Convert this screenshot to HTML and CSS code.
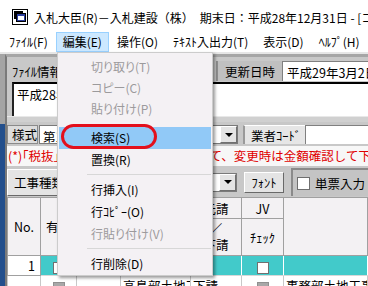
FILE: index.html
```html
<!DOCTYPE html>
<html lang="ja">
<head>
  <meta charset="UTF-8">
  <title>入札大臣</title>
  <link rel="stylesheet" href="styles.css">
</head>
<body>
<div class="window">
  <div class="titlebar">
    <svg class="app-icon" width="16" height="16" viewBox="0 0 16 16">
      <rect x="0.5" y="0.5" width="15" height="15" fill="#fff" stroke="#000"/>
      <rect x="2" y="2" width="9" height="8" fill="#000"/>
      <rect x="4.5" y="4.5" width="9" height="8" fill="#2c3f9e" stroke="#000"/>
      <rect x="6" y="7" width="6" height="4" fill="#fff"/>
    </svg>
    <span class="caption">入札大臣(R)－入札建設（株）　期末日：平成28年12月31日 - [コスト管理]</span>
  </div>

  <div class="menubar">
    <span class="menu-item">ﾌｧｲﾙ(F)</span>
    <span class="menu-item open">編集(E)</span>
    <span class="menu-item">操作(O)</span>
    <span class="menu-item">ﾃｷｽﾄ入出力(T)</span>
    <span class="menu-item">表示(D)</span>
    <span class="menu-item">ﾍﾙﾌﾟ(H)</span>
  </div>

  <div class="client">
    <div class="edge"></div>
    <div class="child">
      <div class="file-row">
        <div class="label file-label">ﾌｧｲﾙ情報</div>
        <div class="fill"></div>
        <div class="label updated-label">更新日時</div>
        <div class="field updated-field">平成29年3月2日 10:25</div>
      </div>

      <div class="memo">平成28年度 入札データ</div>
      <div class="band"></div>

      <div class="style-row">
        <div class="label box-label">様式</div>
        <div class="combo wide">
          <span class="combo-text">第1号様式</span>
          <span class="drop"><i class="arrow"></i></span>
        </div>
        <div class="label tab-label">業者ｺｰﾄﾞ</div>
        <div class="field code-field"></div>
      </div>

      <div class="notice">(*)｢税抜｣の金額で明細項目を入力して、変更時は金額確認して下さい。</div>

      <div class="tool-row">
        <div class="btn kind-btn">工事種類</div>
        <div class="combo short">
          <span class="combo-text"></span>
          <span class="drop"><i class="arrow"></i></span>
        </div>
        <div class="btn font-btn">ﾌｫﾝﾄ</div>
        <div class="check-group"><span class="check"></span>単票入力</div>
      </div>

      <table class="grid">
        <colgroup>
          <col style="width:33px"><col style="width:36px"><col style="width:44px">
          <col style="width:70px"><col style="width:51px"><col style="width:42px"><col>
        </colgroup>
        <thead>
          <tr class="head-top">
            <th rowspan="2">No.</th>
            <th rowspan="2">有効</th>
            <th rowspan="2">区分</th>
            <th rowspan="2">工事名称</th>
            <th>元請</th>
            <th>JV</th>
            <th rowspan="2"></th>
          </tr>
          <tr class="head-bottom">
            <th class="stack">／<br>下請</th>
            <th>ﾁｪｯｸ</th>
          </tr>
        </thead>
        <tbody>
          <tr class="row-sel">
            <td class="num">1</td>
            <td><span class="cell-check"></span></td>
            <td></td>
            <td></td>
            <td></td>
            <td><span class="cell-check"></span></td>
            <td></td>
          </tr>
          <tr class="row-next">
            <td class="num"></td>
            <td><span class="cell-check off"></span></td>
            <td></td>
            <td class="txt">高島部土地工事</td>
            <td class="txt">下請</td>
            <td><span class="cell-check off"></span></td>
            <td class="txt">事務部土地工事</td>
          </tr>
        </tbody>
      </table>
    </div>
  </div>

  <div class="dropdown">
    <div class="mi off first">切り取り(T)</div>
    <div class="mi off first">コピー(C)</div>
    <div class="mi off first">貼り付け(P)</div>
    <div class="gap"></div>
    <div class="mi hot">検索(S)</div>
    <div class="mi">置換(R)</div>
    <div class="sep"></div>
    <div class="mi">行挿入(I)</div>
    <div class="mi">行ｺﾋﾟｰ(O)</div>
    <div class="mi off">行貼り付け(V)</div>
    <div class="sep"></div>
    <div class="mi">行削除(D)</div>
  </div>
  <div class="mark"></div>
</div>
</body>
</html>
```

FILE: styles.css
```css
* {
    box-sizing: border-box;
}
html, body {
    margin: 0;
}
body {
    width: 368px;
    height: 286px;
    overflow: hidden;
    background: #fff;
    color: #000;
    font-family: "Noto Sans CJK JP", "Noto Sans", sans-serif;
}
.window {
    position: relative;
    width: 368px;
    height: 286px;
    overflow: hidden;
}

/* title + menu bar */
.titlebar {
    height: 31px;
    padding: 3px 0 0 12px;
    display: flex;
    align-items: center;
    gap: 6px;
    font-size: 12px;
    white-space: nowrap;
}
.app-icon {
    flex: none;
}
.menubar {
    height: 21px;
    padding: 1px 0 0 2px;
    display: flex;
    gap: 1px;
    font-size: 12px;
    white-space: nowrap;
}
.menu-item {
    height: 20px;
    line-height: 18px;
    padding: 0 6px;
    border: 1px solid transparent;
}
.menu-item.open {
    background: #cce8ff;
    border-color: #99d1ff;
}

/* mdi area */
.client {
    height: 234px;
    display: flex;
    border-top: 2px solid #e6e6e6;
    background: #a0a0a0;
}
.edge {
    width: 5px;
    background: linear-gradient(#a4a4a4 0 70px, #234f8c 70px);
}
.child {
    flex: 1;
    min-width: 0;
    display: flex;
    flex-direction: column;
    border-top: 3px solid #a6a6a6;
    border-left: 2px solid #7a7a7a;
    background: #c8c8c8;
    font-size: 12.5px;
}
.child > * {
    flex: none;
}
.label {
    display: flex;
    align-items: center;
    padding: 0 4px;
    white-space: nowrap;
}
.field {
    background: #fff;
    border-top: 1px solid #808080;
    border-left: 1px solid #808080;
    padding: 1px 0 0 4px;
    white-space: nowrap;
    overflow: hidden;
}

.file-row {
    height: 25px;
    display: flex;
    padding: 4px 0 1px 1px;
}
.file-label {
    width: 80px;
}
.fill {
    flex: 1;
}
.updated-label {
    width: 66px;
    justify-content: center;
    background: #c0c0c0;
    border-left: 2px solid #8e8e8e;
}
.updated-field {
    width: 86px;
}

.memo {
    height: 34px;
    margin-left: 5px;
    padding: 1px 3px;
    background: #fff;
    border-top: 2px solid #000;
    border-left: 2px solid #222;
    white-space: nowrap;
}
.band {
    height: 6px;
    background: #d0d0d0;
    border-top: 1px solid #e8e8e8;
}

.style-row {
    height: 24px;
    display: flex;
    padding: 3px 0 2px 0;
}
.box-label {
    width: 31px;
    background: #dcdcdc;
    border: 1px solid #8a8a8a;
}
.combo {
    display: flex;
    justify-content: space-between;
    background: #fff;
    border: 1px solid #7a7a7a;
}
.combo.wide {
    width: 199px;
    margin-left: 1px;
}
.combo-text {
    padding: 1px 0 0 3px;
    white-space: nowrap;
    overflow: hidden;
}
.drop {
    width: 17px;
    flex: none;
    display: flex;
    align-items: center;
    justify-content: center;
    background: #e4e4e4;
    border: 1px solid;
    border-color: #fff #707070 #707070 #fff;
}
.arrow {
    width: 0;
    height: 0;
    border-left: 4px solid transparent;
    border-right: 4px solid transparent;
    border-top: 4px solid #000;
}
.tab-label {
    width: 62px;
    margin-left: 5px;
    padding-left: 6px;
    background: #e6e6e6;
    border-top: 1px solid #fff;
    border-left: 2px solid #9a9a9a;
}
.code-field {
    flex: 1;
}

.notice {
    height: 20px;
    line-height: 20px;
    padding-left: 1px;
    background: #f7f7f7;
    color: #e00000;
    white-space: nowrap;
    overflow: hidden;
}

.tool-row {
    height: 31px;
    display: flex;
    align-items: center;
    padding: 2px 0 1px 0;
}
.btn {
    display: flex;
    align-items: center;
    background: #e4e4e4;
    border: 1px solid;
    border-color: #fff #696969 #696969 #fff;
    white-space: nowrap;
}
.kind-btn {
    width: 64px;
    height: 27px;
    padding-left: 6px;
}
.combo.short {
    flex: 1;
    height: 19px;
    margin-left: 4px;
}
.font-btn {
    width: 40px;
    height: 21px;
    margin-left: 7px;
    justify-content: center;
}
.check-group {
    width: 77px;
    align-self: stretch;
    margin-left: 7px;
    display: flex;
    align-items: center;
    gap: 5px;
    padding-left: 4px;
    background: #c4c4c4;
    border-top: 2px solid #8a8a8a;
    border-left: 2px solid #8a8a8a;
    white-space: nowrap;
}
.check {
    width: 13px;
    height: 13px;
    flex: none;
    background: #fff;
    border: 1px solid #6f6f6f;
}

/* grid */
.grid {
    width: 361px;
    border-collapse: collapse;
    table-layout: fixed;
    background: #fff;
    font-size: 12.5px;
}
.grid th, .grid td {
    padding: 0;
    border: 1px solid #a0a0a0;
    text-align: center;
    font-weight: normal;
    white-space: nowrap;
    overflow: hidden;
}
.grid th {
    background: #f3f1f3;
}
.head-top {
    height: 21px;
}
.head-bottom {
    height: 37px;
}
.stack {
    line-height: 16px;
}
.row-sel {
    height: 18px;
}
.row-sel td {
    background: #42caca;
    border-color: #a0a0a0 #fff #d8d8d8 #fff;
}
.row-sel td.num {
    background: #fff;
    border-color: #a0a0a0;
}
.num {
    text-align: right !important;
    padding-right: 5px !important;
}
.row-next {
    height: 18px;
}
.row-next td {
    border-color: #c8c8c8;
}
.row-next .txt {
    text-align: left;
    padding-left: 2px;
}
.cell-check {
    display: inline-block;
    width: 12px;
    height: 12px;
    vertical-align: middle;
    background: #fff;
    border: 1px solid #707070;
}
.cell-check.off {
    background: #a8a8a8;
    border-color: #909090;
}

/* open edit menu */
.dropdown {
    position: absolute;
    left: 57px;
    top: 52px;
    width: 156px;
    padding: 3px 1px 0 1px;
    background: #f4f1f4;
    border: 1px solid #cccccc;
    box-shadow: 2px 2px 3px rgba(0, 0, 0, 0.4);
    font-size: 12px;
    font-feature-settings: "palt";
    white-space: nowrap;
}
.mi {
    height: 22px;
    line-height: 22px;
    padding-left: 32px;
}
.mi.first {
    height: 21px;
    line-height: 21px;
}
.mi.off {
    color: #9c9a9c;
}
.mi.hot {
    background: #91c9f7;
}
.gap {
    height: 8px;
}
.sep {
    height: 8px;
    margin-left: 28px;
    background: linear-gradient(transparent 3px, #d7d7d7 3px, #d7d7d7 4px, transparent 4px);
}
.mark {
    position: absolute;
    left: 61px;
    top: 124px;
    width: 96px;
    height: 25px;
    border: 3px solid #e3101c;
    border-radius: 13px;
}
```
